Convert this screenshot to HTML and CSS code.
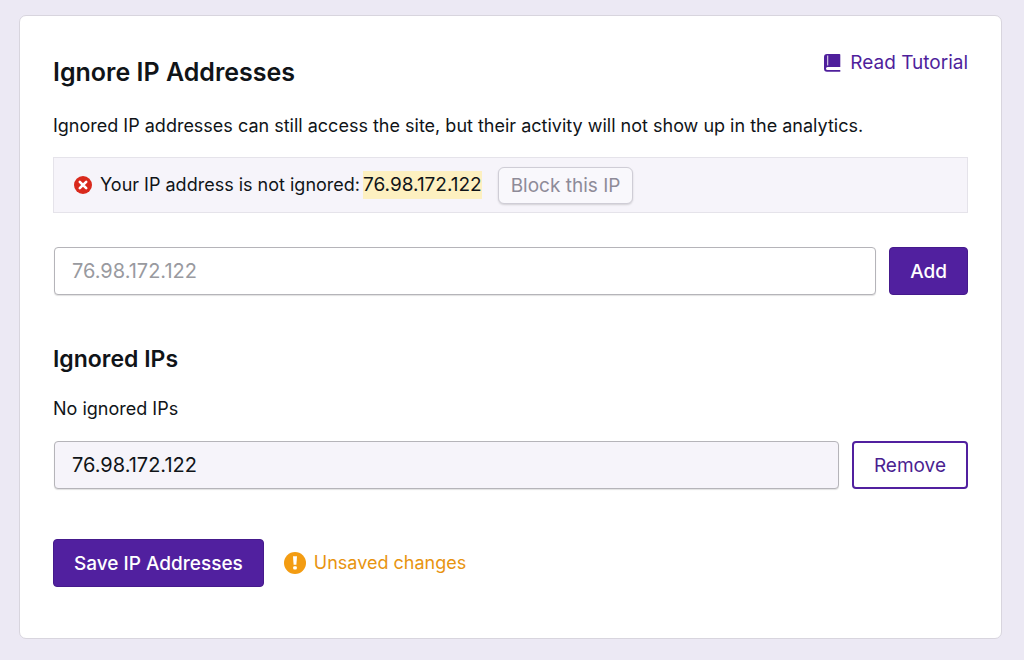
FILE: index.html
```html
<!DOCTYPE html>
<html lang="en">
<head>
    <meta charset="UTF-8">
    <meta name="viewport" content="width=device-width, initial-scale=1.0">
    <title>Ignore IP Addresses</title>
    <link rel="stylesheet" href="styles.css">
</head>
<body>
    <main class="card">
        <div class="card-header">
            <h1>Ignore IP Addresses</h1>
            <a href="#" class="tutorial-link">
                <svg width="18" height="20" viewBox="0 0 18 20" aria-hidden="true">
                    <path fill="currentColor" fill-rule="evenodd" d="M4 1h12.500a.8.8 0 0 1 .8.800V14H4.500a1.500 1.500 0 0 0 0 3h12.800v1.700H4A3 3 0 0 1 1 15.700V4a3 3 0 0 1 3-3zM4.300 2.500v10h.9v-10z"/>
                </svg>
                Read Tutorial
            </a>
        </div>
        <p class="description">Ignored IP addresses can still access the site, but their activity will not show up in the analytics.</p>

        <div class="notice">
            <svg class="notice-icon" width="18" height="18" viewBox="0 0 18 18" aria-hidden="true">
                <circle cx="9" cy="9" r="9" fill="#d9291c"/>
                <path d="M5.800 5.800l6.400 6.400M12.200 5.800l-6.400 6.400" stroke="#fff" stroke-width="2.600" stroke-linecap="round"/>
            </svg>
            <span>Your IP address is not ignored:</span>
            <mark>76.98.172.122</mark>
            <button type="button" class="block-btn">Block this IP</button>
        </div>

        <form id="ipForm">
            <div class="field-row add-row">
                <input type="text" id="newIp" placeholder="76.98.172.122" aria-label="IP address to ignore">
                <button type="button" class="btn">Add</button>
            </div>

            <h2>Ignored IPs</h2>
            <p class="empty">No ignored IPs</p>

            <div class="field-row">
                <input type="text" id="ignoredIp" value="76.98.172.122" aria-label="Ignored IP address" readonly>
                <button type="button" class="btn btn-outline">Remove</button>
            </div>

            <div class="save-row">
                <button type="submit" class="btn">Save IP Addresses</button>
                <span class="unsaved">
                    <svg width="22" height="22" viewBox="0 0 22 22" aria-hidden="true">
                        <circle cx="11" cy="11" r="11" fill="#f39c12"/>
                        <path d="M9 4.200h4l-.6 8.500H9.600z" fill="#fff"/>
                        <rect x="9.200" y="14.200" width="3.600" height="3.400" rx="1" fill="#fff"/>
                    </svg>
                    Unsaved changes
                </span>
            </div>
        </form>
    </main>
</body>
</html>
```
FILE: styles.css
```css
* {
    box-sizing: border-box;
}
body {
    margin: 0;
    padding: 15px 22px 22px 19px;
    background-color: #ece9f4;
    color: #101418;
    font-family: Inter, sans-serif;
    font-size: 18px;
    line-height: 28px;
}
.card {
    padding: 33px 33px 51px;
    background-color: #fff;
    border: 1px solid #d8d5de;
    border-radius: 7px;
}
.card-header {
    display: flex;
    justify-content: space-between;
    align-items: flex-start;
}
h1,
h2 {
    margin: 0;
    font-weight: 600;
    line-height: 32px;
}
h1 {
    padding-top: 7px;
    font-size: 25px;
}
h2 {
    font-size: 23px;
}
.tutorial-link {
    display: flex;
    align-items: center;
    gap: 9px;
    color: #4f1f9c;
    font-size: 19px;
    text-decoration: none;
}
.description {
    margin: 24px 0 17px;
}
.notice {
    display: flex;
    align-items: center;
    min-height: 56px;
    padding: 8px 20px;
    background-color: #f6f4fa;
    border: 1px solid #e5e3ea;
}
.notice-icon {
    margin-right: 8px;
}
mark {
    margin: 0 16px 0 3px;
    background-color: #fdf0c0;
    color: inherit;
    font-size: 19px;
}
button {
    font-family: inherit;
    font-size: 19px;
    cursor: pointer;
}
.block-btn {
    height: 37px;
    padding: 0 12px;
    background-color: #f9f8fc;
    border: 1px solid #cfcdd6;
    border-radius: 6px;
    box-shadow: 0 1px 2px rgba(0, 0, 0, 0.15);
    color: #8e8b98;
}
.field-row {
    display: flex;
    gap: 13px;
    padding-left: 1px;
}
.add-row {
    margin: 34px 0 48px;
}
input[type="text"] {
    flex: 1;
    min-width: 0;
    height: 48px;
    padding: 0 17px;
    background-color: #fff;
    border: 1px solid #b5b4b9;
    border-radius: 4px;
    box-shadow: 0 1px 1px rgba(0, 0, 0, 0.12);
    color: #101418;
    font-family: inherit;
    font-size: 20px;
}
input[type="text"]::placeholder {
    color: #999a9f;
}
input[type="text"]:read-only {
    background-color: #f6f4fa;
}
.btn {
    height: 48px;
    padding: 0 20px;
    background-color: #51209f;
    border: 1px solid #451a8c;
    border-radius: 4px;
    color: #fff;
    font-weight: 500;
}
.btn-outline {
    background-color: #fff;
    border: 2px solid #51209f;
    color: #4b1f91;
    font-weight: 400;
}
.empty {
    margin: 20px 0 18px;
}
.save-row {
    display: flex;
    align-items: center;
    gap: 20px;
    margin-top: 50px;
}
.unsaved {
    display: flex;
    align-items: center;
    gap: 8px;
    color: #e8940f;
}
```
